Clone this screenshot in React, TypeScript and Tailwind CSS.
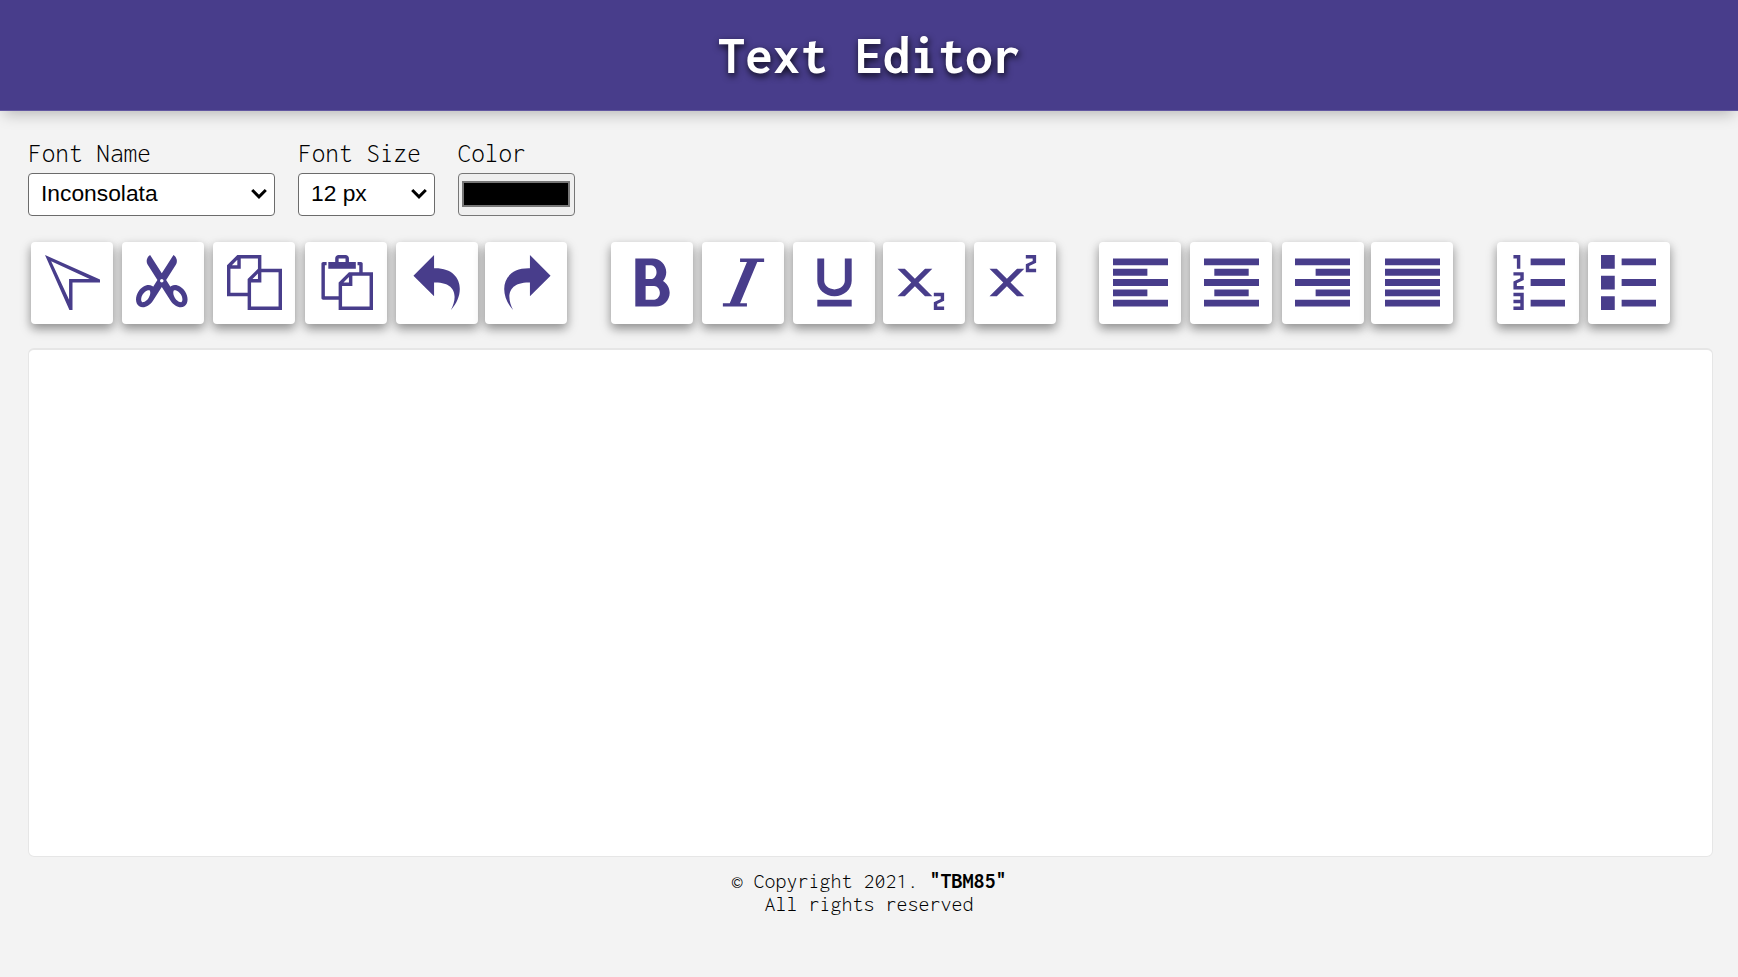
import type { ReactNode } from "react";
import {
  ImBold,
  ImCopy,
  ImItalic,
  ImListNumbered,
  ImParagraphCenter,
  ImParagraphJustify,
  ImParagraphLeft,
  ImParagraphRight,
  ImPaste,
  ImRedo2,
  ImScissors,
  ImSubscript,
  ImSuperscript,
  ImUnderline,
  ImUndo2,
} from "react-icons/im";

function CursorIcon() {
  return (
    <svg viewBox="0 0 16 16" width="1em" height="1em" fill="currentColor">
      <path
        fillRule="evenodd"
        d="M0 0L16 7.1V8H8V16H7.1ZM1.8 1.8L13 7H7V13Z"
      />
    </svg>
  );
}

function BulletListIcon() {
  return (
    <svg viewBox="0 0 16 16" width="1em" height="1em" fill="currentColor">
      <path d="M0 0h4v4H0zM0 6h4v4H0zM0 12h4v4H0zM6 1h10v2H6zM6 7h10v2H6zM6 13h10v2H6z" />
    </svg>
  );
}

function Chevron() {
  return (
    <svg viewBox="0 0 16 11" width="16" height="11" fill="none" className="relative -top-px">
      <path d="M1.2 2L8 8.8L14.8 2" stroke="#000" strokeWidth="3" />
    </svg>
  );
}

type Tool = { name: string; icon: ReactNode; gap: string };

const tools: Tool[] = [
  { name: "select", icon: <CursorIcon />, gap: "ml-0" },
  { name: "cut", icon: <ImScissors />, gap: "ml-[9px]" },
  { name: "copy", icon: <ImCopy />, gap: "ml-[9.4px]" },
  { name: "paste", icon: <ImPaste />, gap: "ml-[9.6px]" },
  { name: "undo", icon: <ImUndo2 />, gap: "ml-[9px] pl-px" },
  { name: "redo", icon: <ImRedo2 />, gap: "ml-[7px] pl-px" },
  { name: "bold", icon: <ImBold />, gap: "ml-[44px] pl-px" },
  { name: "italic", icon: <ImItalic />, gap: "ml-[9px] pl-px" },
  { name: "underline", icon: <ImUnderline />, gap: "ml-[9px] pl-px" },
  { name: "subscript", icon: <ImSubscript />, gap: "ml-[8px]" },
  { name: "superscript", icon: <ImSuperscript />, gap: "ml-[9px] pl-px" },
  { name: "left", icon: <ImParagraphLeft />, gap: "ml-[43px] pl-px" },
  { name: "center", icon: <ImParagraphCenter />, gap: "ml-[9.4px]" },
  { name: "right", icon: <ImParagraphRight />, gap: "ml-[9.6px]" },
  { name: "justify", icon: <ImParagraphJustify />, gap: "ml-[7px] pl-px" },
  { name: "ordered", icon: <ImListNumbered />, gap: "ml-[44px]" },
  { name: "unordered", icon: <BulletListIcon />, gap: "ml-[9px]" },
];

function Field({ label, children }: { label: string; children: ReactNode }) {
  return (
    <div className="flex flex-col">
      <span className="h-[38px] text-[27.3px] leading-[37px] font-[350]">{label}</span>
      {children}
    </div>
  );
}

function Select({ value, width }: { value: string; width: string }) {
  return (
    <button
      className={`${width} flex h-[43px] items-center justify-between rounded-[4px] border border-[#6b6b6b] bg-white pr-[7px] pb-px pl-[12px] font-['Liberation_Sans',Arial,sans-serif] text-[22.8px] leading-none`}
    >
      <span className="relative -top-px">{value}</span>
      <Chevron />
    </button>
  );
}

export default function App() {
  return (
    <div className="min-h-[977px] bg-[#f3f3f3] font-['Inconsolata','Noto_Sans_Mono_CJK_SC',monospace] text-black">
      <header className="flex h-[111px] items-center justify-center border-b border-[#6257a0] bg-[#483d8b] pb-[2px] shadow-[0_7px_14px_-4px_rgba(0,0,0,0.25)]">
        <h1 className="text-[55px] leading-[57px] font-bold text-white [text-shadow:1px_3px_7px_rgba(0,0,0,0.85)]">
          Text Editor
        </h1>
      </header>

      <main className="px-7">
        <div className="flex gap-[23px] pt-[24px]">
          <Field label="Font Name">
            <Select value="Inconsolata" width="w-[247px]" />
          </Field>
          <Field label="Font Size">
            <Select value="12 px" width="w-[136.5px]" />
          </Field>
          <Field label="Color">
            <button className="flex h-[43px] w-[117px] items-center justify-center rounded-[4px] border border-[#767676] bg-[#efefef] pb-px">
              <span className="h-[26px] w-[108px] border-2 border-[#777] bg-black" />
            </button>
          </Field>
        </div>

        <div className="mt-[26px] flex pl-[3px]">
          {tools.map((tool) => (
            <button
              key={tool.name}
              aria-label={tool.name}
              className={`${tool.gap} flex size-[82px] shrink-0 items-center justify-center rounded-[4px] bg-white pb-px text-[55px] text-[#483d8b] shadow-[0_4px_8px_rgba(0,0,0,0.18),0_5px_12px_rgba(0,0,0,0.28)]`}
            >
              {tool.icon}
            </button>
          ))}
        </div>

        <div className="mt-[24px] h-[509px] w-[1685px] rounded-[6px] border border-t-2 border-[#e6e6e6] bg-white" />
      </main>

      <footer className="mt-[12px] text-center text-[22px] leading-[23px] font-[350]">
        <p>
          © Copyright 2021. <b className="font-bold">"TBM85"</b>
        </p>
        <p>All rights reserved</p>
      </footer>
    </div>
  );
}
